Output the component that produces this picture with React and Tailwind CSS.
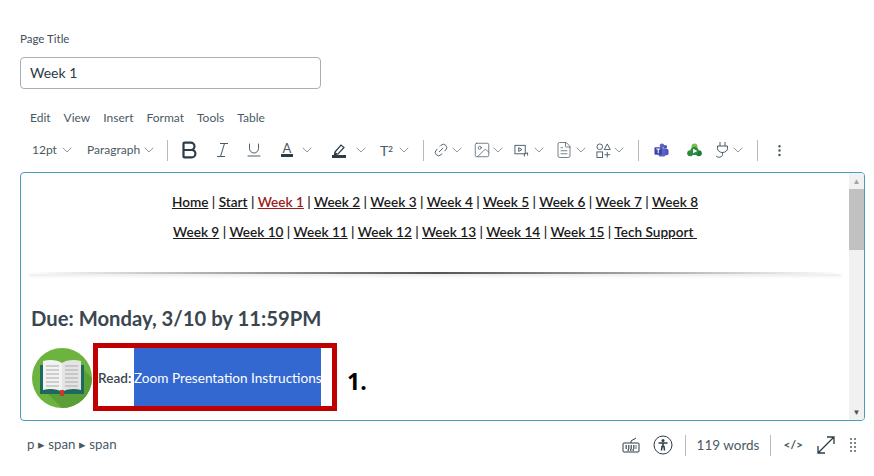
import React from "react";
import { ChevronDown, Bold, Underline, MoreVertical, Link2, Image, FileText } from "lucide-react";

const Chev = ({ className = "" }) => <ChevronDown size={16} strokeWidth={1} className={`shrink-0 text-[#5b6a74] ${className}`} />;

const NAV_ONE = ["Home", "Start", "Week 1", "Week 2", "Week 3", "Week 4", "Week 5", "Week 6", "Week 7", "Week 8"];
const NAV_TWO = ["Week 9", "Week 10", "Week 11", "Week 12", "Week 13", "Week 14", "Week 15", "Tech Support "];

function NavLine({ items }) {
  return (
    <p className="text-center text-[13.6px] leading-[20px] font-semibold text-[#1b1b1b] whitespace-pre">
      {items.map((label, i) => (
        <span key={label}>
          {i > 0 && " | "}
          <span className={label === "Week 1" ? "underline text-[#9c1c1c]" : "underline"}>{label}</span>
        </span>
      ))}
    </p>
  );
}

function BookBadge() {
  return (
    <svg width="60" height="60" viewBox="0 0 60 60" className="shrink-0">
      <circle cx="30" cy="30" r="30" fill="#6cb33f" />
      <path d="M14 44 L30 60 A30 30 0 0 0 60 30 L47 17 Z" fill="#5a9e38" />
      <path d="M8 17 h44 v29 h-44 z" fill="#1d6a5c" />
      <path d="M11 13 c7 -2 15 -1 19 2 v29 c-4 -3 -12 -4 -19 -2 z" fill="#f2f2f2" />
      <path d="M49 13 c-7 -2 -15 -1 -19 2 v29 c4 -3 12 -4 19 -2 z" fill="#e4e4e4" />
      <g stroke="#a9a9a9" strokeWidth="1">
        <path d="M14 18 l13 0 M14 22 l13 0 M14 26 l13 0 M14 30 l13 0 M14 34 l13 0 M14 38 l13 0" />
        <path d="M33 18 l13 0 M33 22 l13 0 M33 26 l13 0 M33 30 l13 0 M33 34 l13 0 M33 38 l13 0" />
      </g>
      <rect x="28" y="42" width="4" height="6" fill="#c8392f" />
    </svg>
  );
}

function ItalicIcon() {
  return (
    <svg width="15" height="16" viewBox="0 0 15 16" fill="none" stroke="#4a5a64" strokeWidth="1">
      <path d="M5 1.5 h8 M2 14.5 h8 M9.5 1.5 L5.5 14.5" />
    </svg>
  );
}

function HighlightIcon() {
  return (
    <svg width="14" height="16" viewBox="0 0 14 16" fill="none">
      <path d="M3 10 L9 3 L12 5.5 L6 12 L2.5 12.5 Z" stroke="#2d3b45" strokeWidth="1.2" />
      <path d="M3 10 L6 12 L2.5 12.5 Z" fill="#2d3b45" />
      <rect x="0" y="13" width="14" height="3" fill="#2d3b45" />
    </svg>
  );
}

function TeamsIcon() {
  return (
    <svg width="15" height="15" viewBox="0 0 16 16" className="block">
      <circle cx="12" cy="4" r="2" fill="#4f55b5" />
      <circle cx="8.5" cy="3" r="2.4" fill="#5b62c8" />
      <rect x="9" y="6" width="6.5" height="7" rx="2" fill="#4f55b5" />
      <rect x="5" y="5.5" width="7" height="9" rx="1.5" fill="#5b62c8" />
      <rect x="0.5" y="4.5" width="8" height="8" rx="1" fill="#3f45a8" />
      <path d="M2.5 6.5 h4 M4.5 6.5 v4.5" stroke="#fff" strokeWidth="1.1" />
    </svg>
  );
}

function MediaIcon() {
  return (
    <svg width="15" height="15" viewBox="0 0 16 16" className="block">
      <circle cx="8" cy="3.6" r="3.2" fill="#7cc04b" />
      <circle cx="3.4" cy="11" r="3.2" fill="#2e8b3d" />
      <circle cx="12.6" cy="11" r="3.2" fill="#1f7a3a" />
      <circle cx="8" cy="8.5" r="4.4" fill="#2e8b3d" />
      <path d="M6.5 6.2 L11 8.6 L6.5 11 Z" fill="#fff" />
    </svg>
  );
}

function VideoIcon() {
  return (
    <svg width="15" height="15" viewBox="0 0 16 16" fill="none" stroke="#4a5a64" strokeWidth="1" className="block">
      <rect x="1" y="2.5" width="11" height="9" />
      <path d="M5 5 L8.5 7 L5 9 Z" />
      <path d="M11 14.5 v-3 l3.5 -1 v3" />
    </svg>
  );
}

function ShapesIcon() {
  return (
    <svg width="15" height="15" viewBox="0 0 16 16" fill="none" stroke="#4a5a64" strokeWidth="1" className="block">
      <circle cx="4" cy="4" r="3" />
      <path d="M12 1 L15.2 7 H8.8 Z" />
      <rect x="1" y="9.5" width="6" height="6" />
      <path d="M12 9.5 v6 M9 12.5 h6" />
    </svg>
  );
}

function PlugIcon() {
  return (
    <svg width="15" height="18" viewBox="0 0 15 18" fill="none" stroke="#4a5a64" strokeWidth="1" className="block">
      <path d="M5 1 v4 M10 1 v4 M2.5 5 h10 v2.5 a5 4 0 0 1 -10 0 Z" />
      <path d="M7.5 11.5 v2 c0 3 -5 3.5 -6.5 1.5" />
    </svg>
  );
}

function KeyboardIcon() {
  return (
    <svg width="18" height="16" viewBox="0 0 18 16" fill="none" stroke="#2d3b45" strokeWidth="1" className="block">
      <path d="M9 6 V4 L14 1" />
      <rect x="1" y="6" width="16" height="9" rx="1" />
      <path d="M3.5 9 h11 M3.5 11 h11 M5.5 13 h7" strokeDasharray="1.5 1" strokeWidth="1.3" />
    </svg>
  );
}

function A11yIcon() {
  return (
    <svg width="20" height="20" viewBox="0 0 20 20" fill="none" stroke="#2d3b45" className="block">
      <circle cx="10" cy="10" r="9" strokeWidth="1" />
      <circle cx="10" cy="5.5" r="1.5" fill="#2d3b45" stroke="none" />
      <path d="M5.5 8 h9 M10 8 v4 M8.5 15.5 L9 11.5 h2 L11.5 15.5" strokeWidth="1.5" />
    </svg>
  );
}

function GripDots() {
  return (
    <span className="grid grid-cols-2 gap-[2px]">
      {[0, 1, 2, 3, 4, 5, 6, 7].map((n) => (
        <span key={n} className="w-[2px] h-[2px] bg-[#7c868d]" />
      ))}
    </span>
  );
}

function Sep({ className = "" }) {
  return <span className={`block shrink-0 w-px h-[21px] bg-[#b4bcc2] ${className}`} />;
}

export default function App() {
  return (
    <div
      className="relative w-[874px] h-[476px] bg-white text-[#2d3b45] overflow-hidden pl-5 pt-[32px]"
      style={{ fontFamily: "Lato, 'Open Sans', sans-serif" }}
    >
      <div className="text-[11.5px] leading-[13px] text-[#444f57]">Page Title</div>

      <div className="mt-[12px] w-[301px] h-8 flex items-center px-[9px] pb-[2px] border border-[#a5afb5] rounded text-[14px]">
        Week 1
      </div>

      {/* menu bar */}
      <div className="mt-[21px] flex gap-[13px] pl-[10px] text-[12px] leading-[16px] text-[#4a5a64]">
        <span>Edit</span>
        <span>View</span>
        <span>Insert</span>
        <span>Format</span>
        <span>Tools</span>
        <span>Table</span>
      </div>

      {/* toolbar */}
      <div className="mt-[12px] h-[24px] flex items-center text-[12px] text-[#4a5a64]">
        <span className="ml-[12px] w-[25px]">12pt</span>
        <Chev className="ml-[2px]" />
        <span className="ml-[12px] w-[52px]">Paragraph</span>
        <Chev className="ml-[2px]" />
        <Sep className="ml-[10px]" />
        <Bold size={22} strokeWidth={2.4} className="ml-[10px] text-[#2d3b45]" />
        <span className="ml-[15px]"><ItalicIcon /></span>
        <Underline size={18} strokeWidth={1.3} className="ml-[15px]" />
        <span className="ml-[18px] w-3 flex flex-col items-center text-[13px] leading-[11px]">
          A
          <span className="w-3 h-[3px] bg-[#2d3b45]" />
        </span>
        <Chev className="ml-[6px]" />
        <span className="ml-[17px]"><HighlightIcon /></span>
        <Chev className="ml-[7px]" />
        <span className="ml-[11px] w-[14px] text-[14px] whitespace-nowrap">T<sup className="text-[8px] font-bold">2</sup></span>
        <Chev className="ml-[2px]" />
        <Sep className="ml-[11px]" />
        <Link2 size={16} strokeWidth={1.3} className="ml-[9px] -rotate-45" />
        <Chev />
        <Image size={18} strokeWidth={1} className="ml-[8px]" />
        <Chev className="ml-[-1px]" />
        <span className="ml-[8px]"><VideoIcon /></span>
        <Chev className="ml-[2px]" />
        <FileText size={18} strokeWidth={1} className="ml-[8px]" />
        <Chev />
        <span className="ml-[7px]"><ShapesIcon /></span>
        <Chev />
        <Sep className="ml-[11px]" />
        <span className="ml-[15px]"><TeamsIcon /></span>
        <span className="ml-[18px]"><MediaIcon /></span>
        <span className="ml-[13px]"><PlugIcon /></span>
        <Chev />
        <Sep className="ml-[11px]" />
        <MoreVertical size={15} strokeWidth={2} className="ml-[14px]" />
      </div>

      {/* editor */}
      <div className="mt-[10px] w-[845px] h-[249px] flex border border-[#4a9bc0] rounded-sm overflow-hidden">
        <div className="flex-1 min-w-0 pt-[19px]">
          <NavLine items={NAV_ONE} />
          <div className="h-[10px]" />
          <NavLine items={NAV_TWO} />
          <div className="mx-2 mt-[30px] h-[2px] bg-gradient-to-r from-white via-[#555555] to-white shadow-[0_2px_3px_rgba(0,0,0,0.12)]" />
          <h2 className="mt-[31px] pl-[10px] text-[20.25px] leading-[26px] font-bold text-[#3a4750]">
            Due: Monday, 3/10 by 11:59PM
          </h2>
          <div className="mt-[17px] pl-[11px] flex items-center text-[13.6px] leading-[16px]">
            <BookBadge />
            <span className="ml-[6px] w-[36px] text-[#3a4750] font-semibold">Read:</span>
            <span className="flex items-center h-[60px] w-[187px] bg-[#3468d1] text-white whitespace-nowrap">
              Zoom Presentation Instructions
            </span>
          </div>
        </div>

        {/* scrollbar */}
        <div className="w-[15px] bg-[#f1f1f1] flex flex-col items-center">
          <span className="h-[16px] text-[8px] leading-[16px] text-[#a3a3a3]">▲</span>
          <span className="w-full h-[61px] bg-[#c1c1c1]" />
          <span className="flex-1" />
          <span className="h-[16px] text-[8px] leading-[16px] text-[#505050]">▼</span>
        </div>
      </div>

      {/* status bar */}
      <div className="mt-[13px] w-[836px] h-[22px] flex items-center text-[#4a5a64]">
        <span className="ml-[7px] text-[13.3px]">p ▸ span ▸ span</span>
        <span className="flex-1" />
        <KeyboardIcon />
        <span className="ml-[13px]"><A11yIcon /></span>
        <Sep className="ml-[12px]" />
        <span className="ml-[11px] text-[13.5px]">119 words</span>
        <Sep className="ml-[11px]" />
        <span className="ml-[12px] text-[12px] font-bold">&lt;/&gt;</span>
        <svg width="20" height="20" viewBox="0 0 20 20" fill="none" stroke="#2d3b45" strokeWidth="1.3" className="ml-[13px]">
          <path d="M2 18 L18 2 M11 2 h7 v7 M2 11 v7 h7" />
        </svg>
        <span className="ml-[14px]"><GripDots /></span>
      </div>

      {/* annotation over the screenshot */}
      <div className="absolute left-[93px] top-[343px] w-[244px] h-[68px] border-[5px] border-[#c00000]" />
      <div className="absolute left-[347px] top-[368px] text-[23px] leading-[26px] font-bold text-black" style={{ fontFamily: "'Open Sans', sans-serif" }}>
        1.
      </div>
    </div>
  );
}
